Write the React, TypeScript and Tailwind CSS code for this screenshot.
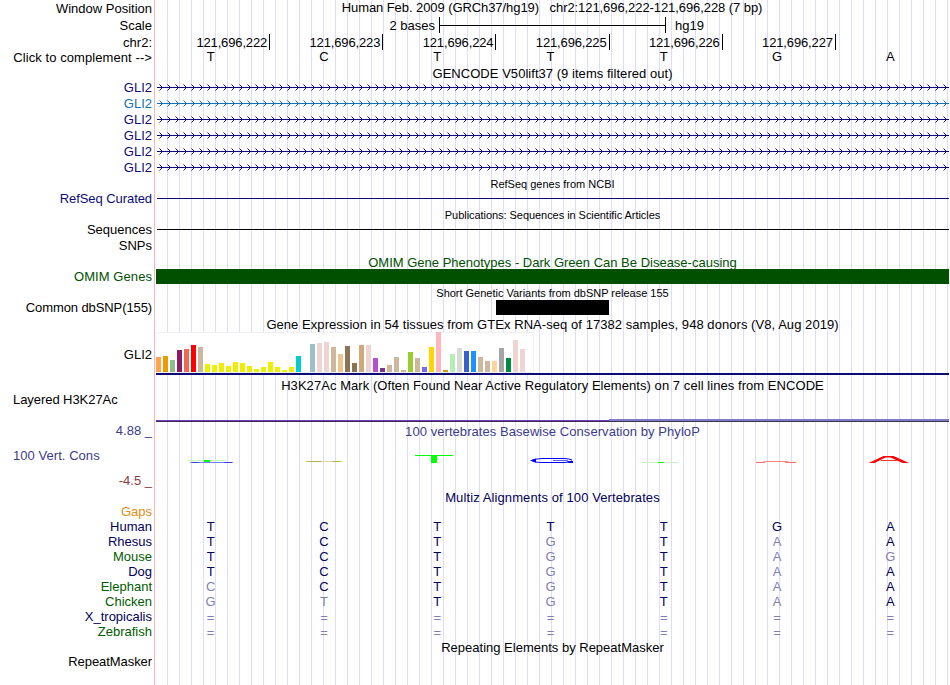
import React from 'react';

const smallTitle = 'text-[11px]';

const geneRows = [
  { id: 1, text: 'text-[#0c0c78]', stroke: '#0c0c78' },
  { id: 2, text: 'text-[#1470b4]', stroke: '#1470b4' },
  { id: 3, text: 'text-[#0c0c78]', stroke: '#0c0c78' },
  { id: 4, text: 'text-[#0c0c78]', stroke: '#0c0c78' },
  { id: 5, text: 'text-[#0c0c78]', stroke: '#0c0c78' },
  { id: 6, text: 'text-[#0c0c78]', stroke: '#0c0c78' },
];

const positions = ['121,696,222', '121,696,223', '121,696,224', '121,696,225', '121,696,226', '121,696,227'];

// [color, height in px], one entry per tissue
const tissues: [string, number][] = [
  ['#FFA54F', 15], ['#EE9A00', 16], ['#8FBC8F', 12], ['#8B1C62', 22], ['#EE6A50', 23], ['#FF0000', 27],
  ['#CDB79E', 25], ['#EEEE00', 8], ['#EEEE00', 7], ['#EEEE00', 9], ['#EEEE00', 6], ['#EEEE00', 10],
  ['#EEEE00', 9], ['#EEEE00', 6], ['#EEEE00', 3], ['#EEEE00', 5], ['#EEEE00', 10], ['#EEEE00', 5],
  ['#EEEE00', 2], ['#EEEE00', 5], ['#00CDCD', 16], ['#EE82EE', 0], ['#9AC0CD', 28], ['#EED5D2', 29],
  ['#EED5D2', 30], ['#CDB79E', 25], ['#EEC591', 18], ['#8B7355', 26], ['#8B7355', 9], ['#CDAA7D', 27],
  ['#EED5D2', 27], ['#B452CD', 14], ['#7A378B', 4], ['#CDB79E', 7], ['#CDB79E', 15], ['#CDB79E', 2],
  ['#9ACD32', 20], ['#CDB79E', 14], ['#7A67EE', 5], ['#FFD700', 25], ['#FFB6C1', 40], ['#CD9B1D', 2],
  ['#B4EEB4', 18], ['#D9D9D9', 24], ['#3A5FCD', 21], ['#1E90FF', 21], ['#CDB79E', 15], ['#CDB79E', 11],
  ['#FFD39B', 11], ['#A6A6A6', 24], ['#008B45', 14], ['#EED5D2', 32], ['#EED5D2', 23], ['#FF00FF', 0],
];

const species = [
  { name: 'Human', color: 'text-[#00005a]', bases: 'TCTTTGA' },
  { name: 'Rhesus', color: 'text-[#00005a]', bases: 'TCTGTAA' },
  { name: 'Mouse', color: 'text-[#005a00]', bases: 'TCTGTAG' },
  { name: 'Dog', color: 'text-[#00005a]', bases: 'TCTGTAA' },
  { name: 'Elephant', color: 'text-[#005a00]', bases: 'CCTGTAA' },
  { name: 'Chicken', color: 'text-[#005a00]', bases: 'GTTGTAA' },
  { name: 'X_tropicalis', color: 'text-[#00005a]', bases: '=======' },
  { name: 'Zebrafish', color: 'text-[#005a00]', bases: '=======' },
];

const Label = ({ children, className = '' }: { children?: React.ReactNode; className?: string }) => (
  <div className={`w-[154px] shrink-0 pr-[2px] text-right ${className}`}>{children}</div>
);

const Title = ({ children, className }: { children: React.ReactNode; className: string }) => (
  <div className={`ml-[156px] flex w-[793px] items-center justify-center ${className}`}>
    <span>{children}</span>
  </div>
);

const Bases = ({ bases, human }: { bases: string; human?: string }) => (
  <div className="grid w-[793px] grid-cols-7 text-center">
    {bases.split('').map((b, i) => (
      <span key={i} className={`${human && human[i] !== b ? 'text-[#8080b4]' : ''} ${b === '=' ? 'pt-px' : ''}`}>{b}</span>
    ))}
  </div>
);

const GeneArrows = ({ stroke }: { stroke: string }) => (
  <svg className="ml-[3px] h-[16px] w-[792px]" viewBox="0 0 792 16" fill="none" stroke={stroke}>
    <path d="M0 8.5H792" />
    {Array.from({ length: 99 }, (_, i) => (
      <path key={i} d={`M${2.5 + i * 8} 5.5l3 3l-3 3`} />
    ))}
  </svg>
);

const ConservationLogo = () => (
  <svg className="ml-[2px] h-[20px] w-[793px]" viewBox="156 450 793 20" fill="none">
    <path d="M188 460.5h38" stroke="#b4ffb4" />
    <path d="M190 462.5h43" stroke="#7a7aff" />
    <path d="M192 462.5h7M224 462.5h8" stroke="#4040e0" />
    <path d="M204 460h6v2h-6z" fill="#00ff00" />
    <path d="M305 461.5h38" stroke="#d8d8a0" />
    <path d="M308 461.5h13M333 461.5h7" stroke="#b4b43c" />
    <path d="M415 455.5h38" stroke="#00ff00" />
    <path d="M431 455h6v8h-6z" fill="#00ff00" />
    <path d="M572 460q-3-1.5-9-1.5h-20q-10 .5-11 2q1 2 11 2h20q6 0 9-1.5" stroke="#0000ff" />
    <path d="M553 460.5h15" stroke="#6464ff" />
    <path d="M530 460.5l6-2v4zM567 461h6v2h-4z" fill="#0000ff" />
    <path d="M642 462.5h37" stroke="#c8f5c8" />
    <path d="M658 462.5h6" stroke="#00ff00" />
    <path d="M756 462.5h9M785 462.5h11" stroke="#ff7070" />
    <path d="M763 462l4-.5h18l4 .5" stroke="#ff8080" />
    <path d="M868.5 463l15-7h10l15.500 7h-6.500l-12-5.500h-5l-11 5.500z" fill="#ff0000" />
    <path d="M881 460.500h16" stroke="#ff3030" />
  </svg>
);

export default function App() {
  return (
    <div className="h-[685px] w-[950px] overflow-hidden bg-white bg-[linear-gradient(to_right,#fff_154px,#ffb4b4_154px,#ffb4b4_155px,#fff_155px,#fff_156px,transparent_156px),repeating-linear-gradient(to_right,#fff_0px,#fff_11px,#dcdcff_11px,#dcdcff_12px)] font-['Liberation_Sans',Arial,sans-serif] text-[13px] leading-[15px] whitespace-pre text-black">
      {/* Ruler */}
      <div className="flex h-[16px]">
        <Label className="pt-px">Window Position</Label>
        <div className="ml-[2px] w-[792px] text-center tracking-[-0.075px]">Human Feb. 2009 (GRCh37/hg19)   chr2:121,696,222-121,696,228 (7 bp)</div>
      </div>
      <div className="flex h-[18px] items-center">
        <Label>Scale</Label>
        <div className="w-[281px] text-right">2 bases</div>
        <div className="ml-[4px] flex h-[16px] w-[227px] items-center border-x border-black">
          <div className="h-px w-full bg-black" />
        </div>
        <div className="ml-[9px]">hg19</div>
      </div>
      <div className="flex h-[15px]">
        <Label className="pt-px">chr2:</Label>
        <div className="ml-[3px] grid w-[792px] grid-cols-7 text-right tracking-[-0.14px]">
          {positions.map((p) => (
            <div key={p} className="border-r border-black pt-px pr-[2px]">{p}</div>
          ))}
        </div>
      </div>
      <div className="flex h-[16px]">
        <Label className="pt-px tracking-[0.08px]">Click to complement --&gt;</Label>
        <Bases bases="TCTTTGA" />
      </div>

      {/* Gene tracks */}
      <Title className="h-[14px] pt-[2px] tracking-[0.04px]">GENCODE V50lift37 (9 items filtered out)</Title>
      {geneRows.map((g) => (
        <div key={g.id} className="flex h-[16px] items-center">
          <Label className={g.text}>GLI2</Label>
          <GeneArrows stroke={g.stroke} />
        </div>
      ))}
      <Title className={`h-[16px] pt-[3px] ${smallTitle}`}>RefSeq genes from NCBI</Title>
      <div className="flex h-[15px] items-center">
        <Label className="tracking-[-0.07px] text-[#0c0c78]">RefSeq Curated</Label>
        <div className="ml-[3px] h-px w-[792px] bg-[#0c0c78]" />
      </div>
      <Title className={`h-[16px] pt-[3px] tracking-[-0.05px] ${smallTitle}`}>Publications: Sequences in Scientific Articles</Title>
      <div className="flex h-[15px] items-center">
        <Label>Sequences</Label>
        <div className="ml-[3px] h-px w-[792px] bg-black" />
      </div>
      <div className="flex h-[16px] items-center">
        <Label>SNPs</Label>
      </div>

      {/* Phenotype and variation */}
      <Title className="h-[16px] pt-[2px] text-[#005000]">OMIM Gene Phenotypes - Dark Green Can Be Disease-causing</Title>
      <div className="flex h-[15px] items-center">
        <Label className="tracking-[0.07px] text-[#005000]">OMIM Genes</Label>
        <div className="ml-[2px] h-[15px] w-[793px] bg-[#005000]" />
      </div>
      <Title className={`h-[16px] pt-[3px] tracking-[-0.02px] ${smallTitle}`}>Short Genetic Variants from dbSNP release 155</Title>
      <div className="flex h-[15px] items-center">
        <Label className="tracking-[-0.1px]">Common dbSNP(155)</Label>
        <div className="ml-[342px] h-[15px] w-[113px] bg-black" />
      </div>

      {/* Expression */}
      <Title className="h-[17px] pt-px tracking-[0.055px]">Gene Expression in 54 tissues from GTEx RNA-seq of 17382 samples, 948 donors (V8, Aug 2019)</Title>
      <div className="flex h-[44px]">
        <Label className="pt-[15px]">GLI2</Label>
        <div className="ml-[2px] flex w-[793px] flex-col">
          <div className="flex h-[41px] w-[378px] items-end gap-[2px] border-t border-r border-b border-[#f0f0f0] bg-white">
            {tissues.map(([color, height], i) => (
              <div key={i} className="w-[5px] shrink-0" style={{ height, backgroundColor: color }} />
            ))}
          </div>
          <div className="h-[2px] bg-[#0c0c78]" />
        </div>
      </div>

      {/* Regulation */}
      <Title className="h-[17px] pt-[2px] tracking-[0.06px]">H3K27Ac Mark (Often Found Near Active Regulatory Elements) on 7 cell lines from ENCODE</Title>
      <div className="-mt-px flex h-[32px]">
        <div className="w-[154px] shrink-0 pl-[13px] tracking-[-0.06px]">Layered H3K27Ac</div>
        <div className="ml-[2px] flex w-[793px] items-end pb-[2px]">
          <div className="h-[2px] w-[453px] border-b border-[#3c2850] bg-[#6e3cc8]" />
          <div className="h-[3px] w-[340px] border-b border-[#3c3250] bg-[#7c7cc8]" />
        </div>
      </div>

      {/* Conservation */}
      <div className="flex h-[66px] text-[#3c3c8c]">
        <div className="w-[154px] shrink-0">
          <div className="-mt-px h-[25px] pr-[2px] text-right">4.88 _</div>
          <div className="h-[25px] pl-[13px] tracking-[0.05px]">100 Vert. Cons</div>
          <div className="pr-[2px] text-right text-[#8c3c3c]">-4.5 _</div>
        </div>
        <div>
          <div className="ml-[2px] h-[26px] w-[793px] text-center tracking-[0.06px]">100 vertebrates Basewise Conservation by PhyloP</div>
          <ConservationLogo />
        </div>
      </div>

      {/* Multiple alignment */}
      <Title className="h-[14px] pt-px tracking-[0.1px] text-[#00005a]">Multiz Alignments of 100 Vertebrates</Title>
      <div className="flex h-[15px]">
        <Label className="text-[#e68c14]">Gaps</Label>
      </div>
      {species.map((s) => (
        <div key={s.name} className="flex h-[15px] text-[#00005a]">
          <Label className={s.color}>{s.name}</Label>
          <Bases bases={s.bases} human="TCTTTGA" />
        </div>
      ))}
      <Title className="h-[15px] pt-[2px]">Repeating Elements by RepeatMasker</Title>
      <div className="flex h-[15px]">
        <Label className="tracking-[-0.07px]">RepeatMasker</Label>
      </div>
    </div>
  );
}
